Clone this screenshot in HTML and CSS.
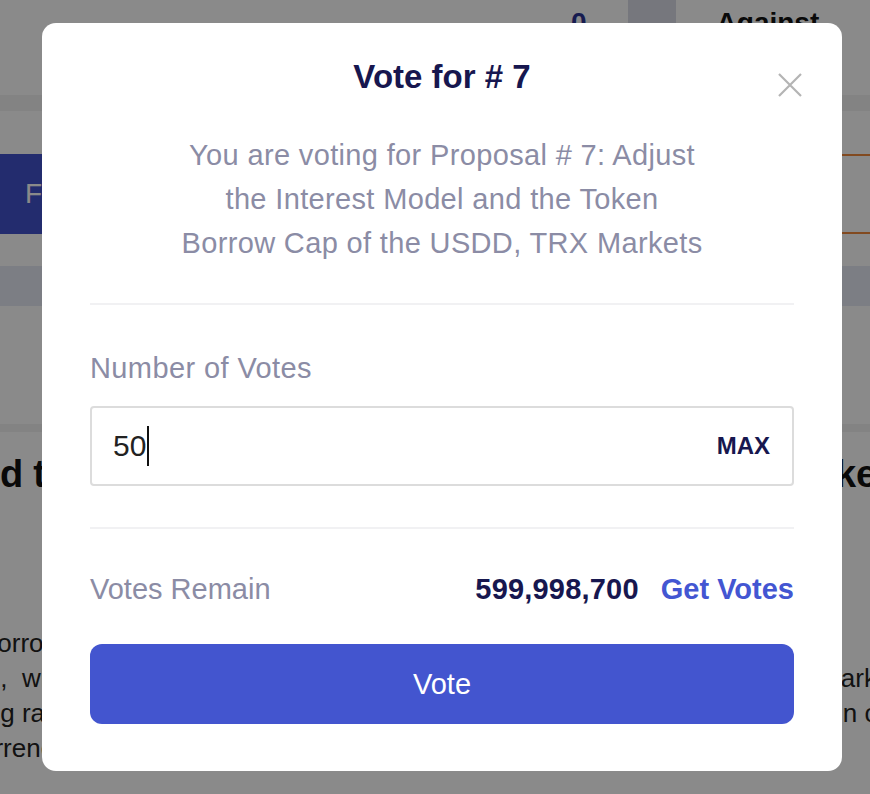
FILE: index.html
```html
<!DOCTYPE html>
<html lang="en">
<head>
<meta charset="utf-8">
<title>Vote for # 7</title>
<link rel="stylesheet" href="styles.css">
</head>
<body>
  <div class="page">
    <div class="topbar">
      <span class="count">0</span>
      <span class="tab-block"></span>
      <span class="against">Against</span>
    </div>
    <div class="band band-thin"></div>
    <div class="actions">
      <div class="for-btn">For</div>
      <div class="against-box"></div>
    </div>
    <div class="band band-wide"></div>
    <div class="band band-thin band-low"></div>
    <h1 class="page-heading">and the Token Borrow Cap of the USDD, TRX Markets</h1>
    <div class="page-text">
      <span class="line">Borrow Cap of the USDD, TRX markets.</span>
      <span class="line">ts,&nbsp; which will help to balance the supply and demand of the USDD, TRX markets</span>
      <span class="line">ing rates, and improve the utilization of the funds deposited in the protocol in c</span>
      <span class="line">urrency markets.</span>
    </div>
  </div>

  <div class="overlay">
    <div class="modal">
      <button class="close" aria-label="Close">
        <svg viewBox="0 0 24 24" width="24" height="24"><path d="M1 1 L23 23 M23 1 L1 23" stroke="#b4b4b4" stroke-width="2.2" fill="none"/></svg>
      </button>
      <h2 class="title">Vote for # 7</h2>
      <p class="desc">You are voting for Proposal # 7: Adjust<br>the Interest Model and the Token<br>Borrow Cap of the USDD, TRX Markets</p>
      <div class="divider"></div>
      <div class="label">Number of Votes</div>
      <div class="input-box">
        <span class="value">50</span><span class="caret"></span>
        <span class="max">MAX</span>
      </div>
      <div class="divider divider-2"></div>
      <div class="remain-row">
        <span class="remain-label">Votes Remain</span>
        <span class="remain-right"><span class="num">599,998,700</span><span class="get">Get Votes</span></span>
      </div>
      <button class="vote-btn">Vote</button>
    </div>
  </div>
</body>
</html>
```

FILE: styles.css
```css
* { box-sizing: border-box; }
html, body { margin: 0; padding: 0; }
body {
  width: 870px;
  height: 794px;
  overflow: hidden;
  background: #ffffff;
  font-family: "Liberation Sans", Arial, Helvetica, sans-serif;
}

/* ---------- background page ---------- */
.page { width: 870px; overflow: hidden; }
.topbar {
  height: 95px;
  display: flex;
  align-items: flex-start;
}
.count {
  margin-left: 571px;
  margin-top: 9px;
  font-size: 28px;
  line-height: 28px;
  font-weight: bold;
  color: #2c3595;
}
.tab-block {
  margin-left: 41px;
  width: 48px;
  height: 95px;
  background: #dbdce8;
}
.against {
  margin-left: 41px;
  margin-top: 9px;
  font-size: 28px;
  line-height: 28px;
  font-weight: bold;
  color: #111;
  white-space: nowrap;
}
.band { width: 870px; }
.band-thin { height: 16px; background: #f2f2f2; }
.actions {
  margin-top: 43px;
  height: 80px;
  display: flex;
  gap: 60px;
}
.for-btn {
  width: 400px;
  flex: none;
  background: #4152cc;
  color: #fff;
  font-size: 28px;
  line-height: 80px;
  padding-left: 25px;
}
.against-box {
  flex: 1;
  border-top: 2px solid #f08a3c;
  border-bottom: 2px solid #f08a3c;
}
.band-wide { margin-top: 32px; height: 40px; background: #e6e9f4; }
.band-low { margin-top: 118px; height: 8px; }
.page-heading {
  margin: 20px 0 0 -44px;
  font-size: 38px;
  line-height: 44px;
  font-weight: bold;
  letter-spacing: -0.2px;
  color: #111;
  white-space: nowrap;
}
.page-text {
  margin: 130px 0 0 -20px;
  font-size: 26px;
  line-height: 35px;
  color: #222;
}
.page-text .line { display: block; white-space: nowrap; }

/* ---------- overlay & modal ---------- */
.overlay {
  position: fixed;
  inset: 0;
  background: rgba(0, 0, 0, 0.46);
  display: flex;
  align-items: flex-start;
  padding: 23px 0 0 42px;
}
.modal {
  position: relative;
  width: 800px;
  background: #ffffff;
  border-radius: 14px;
  padding: 34px 48px 47px;
  display: flex;
  flex-direction: column;
}
.close {
  position: absolute;
  top: 50px;
  right: 40px;
  width: 24px;
  height: 24px;
  padding: 0;
  border: 0;
  background: none;
  display: block;
}
.close svg { display: block; }
.title {
  margin: 0;
  font-size: 33px;
  line-height: 40px;
  font-weight: bold;
  text-align: center;
  color: #17174f;
}
.desc {
  margin: 36px 0 0;
  font-size: 29px;
  line-height: 44px;
  letter-spacing: 0.35px;
  text-align: center;
  color: #8b8ca5;
}
.divider {
  margin-top: 38px;
  height: 2px;
  background: #f1f1f3;
}
.divider-2 { margin-top: 41px; }
.label {
  margin-top: 41px;
  font-size: 29px;
  line-height: 44px;
  letter-spacing: 0.4px;
  color: #8b8ca5;
}
.input-box {
  margin-top: 16px;
  height: 80px;
  border: 2px solid #dcdcdc;
  border-radius: 4px;
  display: flex;
  align-items: center;
  padding: 0 22px 0 21px;
}
.value {
  font-size: 30px;
  line-height: 40px;
  color: #222;
}
.caret {
  width: 2px;
  height: 40px;
  background: #111;
  margin-left: 1px;
}
.max {
  margin-left: auto;
  font-size: 24px;
  font-weight: bold;
  color: #17174f;
}
.remain-row {
  margin-top: 38px;
  display: flex;
  justify-content: space-between;
  font-size: 29px;
  line-height: 44px;
}
.remain-label { color: #8b8ca5; }
.remain-right { display: flex; gap: 22px; }
.num { font-weight: bold; color: #17174f; letter-spacing: 0.2px; }
.get { font-weight: bold; color: #4356d2; }
.vote-btn {
  margin-top: 33px;
  height: 80px;
  border: 0;
  border-radius: 12px;
  background: #4355cf;
  color: #ffffff;
  font-family: inherit;
  font-size: 29px;
}
```
